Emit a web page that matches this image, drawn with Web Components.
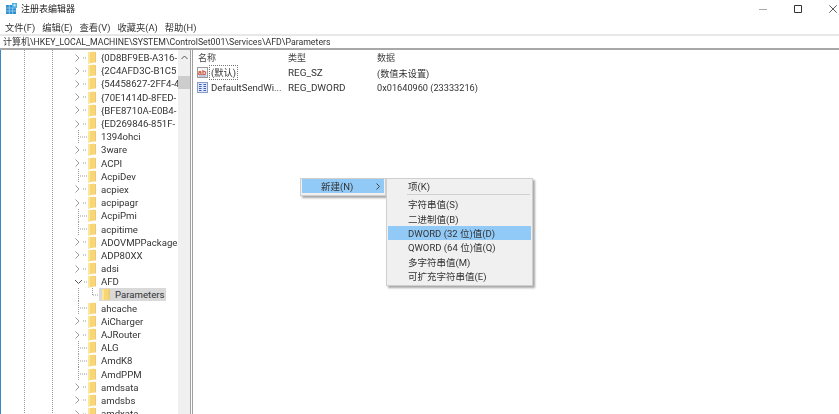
<!DOCTYPE html>
<html>
<head>
<meta charset="utf-8">
<title>注册表编辑器</title>
<style>
html, body { margin: 0; height: 100%; background: #fff; overflow: hidden; }
body { font: 9.6px Roboto, "Noto Sans CJK SC", sans-serif; color: #333; }
</style>
</head>
<body>
<reg-window>
	<reg-titlebar slot="title">注册表编辑器</reg-titlebar>
	<reg-menubar slot="menu">
		<span>文件(F)</span><span>编辑(E)</span><span>查看(V)</span><span>收藏夹(A)</span><span>帮助(H)</span>
	</reg-menubar>
	<reg-address slot="address"><span style="font-size:9px">计算机</span>\HKEY_LOCAL_MACHINE\SYSTEM\ControlSet001\Services\AFD\Parameters</reg-address>
	<reg-tree slot="tree">
		<tree-row kind="closed">{0D8BF9EB-A316-</tree-row>
		<tree-row kind="closed">{2C4AFD3C-B1C5</tree-row>
		<tree-row kind="closed">{54458627-2FF4-4</tree-row>
		<tree-row kind="closed">{70E1414D-8FED-</tree-row>
		<tree-row kind="closed">{BFE8710A-E0B4-</tree-row>
		<tree-row kind="closed">{ED269846-851F-</tree-row>
		<tree-row kind="leaf">1394ohci</tree-row>
		<tree-row kind="closed">3ware</tree-row>
		<tree-row kind="closed">ACPI</tree-row>
		<tree-row kind="leaf">AcpiDev</tree-row>
		<tree-row kind="closed">acpiex</tree-row>
		<tree-row kind="closed">acpipagr</tree-row>
		<tree-row kind="leaf">AcpiPmi</tree-row>
		<tree-row kind="leaf">acpitime</tree-row>
		<tree-row kind="closed">ADOVMPPackage</tree-row>
		<tree-row kind="closed">ADP80XX</tree-row>
		<tree-row kind="closed">adsi</tree-row>
		<tree-row kind="open">AFD</tree-row>
		<tree-row kind="child">Parameters</tree-row>
		<tree-row kind="leaf">ahcache</tree-row>
		<tree-row kind="closed">AiCharger</tree-row>
		<tree-row kind="closed">AJRouter</tree-row>
		<tree-row kind="leaf">ALG</tree-row>
		<tree-row kind="leaf">AmdK8</tree-row>
		<tree-row kind="leaf">AmdPPM</tree-row>
		<tree-row kind="closed">amdsata</tree-row>
		<tree-row kind="closed">amdsbs</tree-row>
		<tree-row kind="closed">amdxata</tree-row>
	</reg-tree>
	<reg-list slot="list">
		<list-row icon="sz" focused type="REG_SZ" data="(数值未设置)">(默认)</list-row>
		<list-row icon="dword" type="REG_DWORD" data="0x01640960 (23333216)">DefaultSendWi...</list-row>
	</reg-list>
</reg-window>
<reg-menu style="left:300px;top:178px;width:86px" class="parent">
	<menu-item hot arrow style="padding-left:19px">新建(N)</menu-item>
</reg-menu>
<reg-menu style="left:386px;top:178px;width:147px">
	<menu-item>项(K)</menu-item>
	<menu-sep></menu-sep>
	<menu-item>字符串值(S)</menu-item>
	<menu-item>二进制值(B)</menu-item>
	<menu-item hot>DWORD (32 位)值(D)</menu-item>
	<menu-item>QWORD (64 位)值(Q)</menu-item>
	<menu-item>多字符串值(M)</menu-item>
	<menu-item>可扩充字符串值(E)</menu-item>
</reg-menu>
<script>
const FOLDER = `<svg class="folder" width="8" height="13" viewBox="0 0 8 13"><path d="M0 1.5 L6.5 0.5 V11.5 L0 12.5 Z" fill="#f8d673"/><path d="M0 1.5 H2 V12.5 H0 Z" fill="#fce59d"/><path d="M6.5 1 H8 V11.5 H6.5 Z" fill="#f0c864"/></svg>`;

const define = (name, css, html) => {
	customElements.define(name, class extends HTMLElement {
		constructor() {
			super();
			this.attachShadow({ mode: 'open' }).innerHTML = `<style>${css}</style>${typeof html === 'function' ? html(this) : html}`;
		}
	});
};

define('reg-window', `
	:host { display: grid; grid-template-columns: 193px 1fr; grid-template-rows: 19px 17px 14px 1fr; height: 414px; width: 839px; filter: blur(.3px); }
	.top { grid-column: 1 / 3; }
	.tree { border-left: 1px solid #3a86c8; overflow: hidden; min-height: 0; }
	.list { min-height: 0; overflow: hidden; }
`, `
	<div class="top"><slot name="title"></slot></div>
	<div class="top"><slot name="menu"></slot></div>
	<div class="top"><slot name="address"></slot></div>
	<div class="tree"><slot name="tree"></slot></div>
	<div class="list"><slot name="list"></slot></div>
`);

define('reg-titlebar', `
	:host { display: flex; align-items: center; height: 19px; padding: 0 2px 0 6px; box-sizing: border-box; color: #222; font-size: 9px; }
	.text { margin-left: 4px; flex: 1; position: relative; top: -1px; }
	.caps { display: flex; align-items: center; gap: 27px; margin-top: -2px; }
	.caps svg { display: block; }
`, `
	<svg width="11" height="11" viewBox="0 0 11 11" style="margin-top:-2px">
		<rect x="0" y="2" width="10" height="9" fill="#2f8fd0"/>
		<path d="M3.3 2V11M6.6 2V11M0 5H10M0 8H10" stroke="#bfe0f5" stroke-width=".6"/>
		<rect x="6" y="0" width="5" height="5" fill="#4fb0e6"/>
		<rect x="7.5" y="1.3" width="2" height="2" fill="#d9eefa"/>
	</svg>
	<span class="text"><slot></slot></span>
	<div class="caps">
		<svg width="8" height="8" viewBox="0 0 8 8"><path d="M0 4.5H8" stroke="#aaa"/></svg>
		<svg width="8" height="8" viewBox="0 0 8 8"><path d="M.5.5H7.5V7.5H.5Z" fill="none" stroke="#333"/></svg>
		<svg width="8" height="8" viewBox="0 0 8 8"><path d="M.3.3L7.7 7.7M7.7.3L.3 7.7" stroke="#333" stroke-width=".8"/></svg>
	</div>
`);

define('reg-menubar', `
	:host { display: flex; align-items: center; height: 17px; padding: 0 0 0 5px; gap: 7px; box-sizing: border-box; font-size: 9.3px; color: #333; border-bottom: 2px solid #e8e8e8; }
`, `<slot></slot>`);

define('reg-address', `
	:host { display: block; height: 14px; line-height: 12px; padding-left: 3px; box-sizing: border-box; font-size: 8.76px; color: #333; border-bottom: 2px solid #a8a8a8; white-space: nowrap; }
`, `<slot></slot>`);

define('reg-tree', `
	:host { display: grid; grid-template-columns: 177px 12px 3px; height: 364px; }
	.rows {
		padding-top: 1px;
		overflow: hidden;
		background:
			repeating-linear-gradient(#999 0 1px, transparent 1px 2px) 23px 0 / 1px 100% no-repeat,
			repeating-linear-gradient(#999 0 1px, transparent 1px 2px) 51px 0 / 1px 100% no-repeat;
	}
	.bar { background: #f0f0f0; display: flex; flex-direction: column; align-items: stretch; }
	.up { height: 14px; display: flex; justify-content: center; align-items: center; }
	.thumb { height: 13px; margin-top: 12px; background: #cdcdcd; }
	.split { border-left: 1px solid #a0a0a0; border-right: 1px solid #a0a0a0; }
`, `
	<div class="rows"><slot></slot></div>
	<div class="bar">
		<div class="up"><svg width="7" height="5" viewBox="0 0 7 5"><path d="M.5 4L3.5 1L6.5 4" fill="none" stroke="#555"/></svg></div>
		<div class="thumb"></div>
	</div>
	<div class="split"></div>
`);

const DOTS = 'stroke="#999" stroke-dasharray="1 1"';
const PREFIX = {
	closed: `<path d="M1.5 3.5L5 7L1.5 10.5" fill="none" stroke="#999"/><path d="M9 7H13" ${DOTS}/>`,
	open: `<path d="M1 5L4.5 8.5L8 5" fill="none" stroke="#555"/><path d="M10 7H13" ${DOTS}/>`,
	leaf: `<path d="M4.5 0V14M6 7H13" ${DOTS}/>`,
	child: `<path d="M4.5 0V14M18.5 0V7M19 7H25" ${DOTS}/>`
};

define('tree-row', `
	:host { display: flex; align-items: center; height: 13.2px; padding-left: 73px; white-space: nowrap; color: #333; }
	svg { display: block; flex: none; }
	.label { margin-left: 5px; line-height: 13px; }
	:host([kind="child"]) .label { background: #d9d9d9; margin-left: 0; padding: 0 2px 0 5px; }
	.box { display: flex; background: #d9d9d9; padding-left: 3px; }
`, (el) => {
	const kind = el.getAttribute('kind');
	const wide = kind === 'child';
	return `<svg width="${wide ? 25 : 14}" height="14" viewBox="0 0 ${wide ? 25 : 14} 14">${PREFIX[kind]}</svg>
	${wide ? `<span class="box">${FOLDER}</span>` : FOLDER}
	<span class="label"><slot></slot></span>`;
});

define('reg-list', `
	:host { display: block; padding-top: 1px; }
	.head { display: grid; grid-template-columns: 90px 89px 1fr; height: 14px; line-height: 14px; padding-left: 5px; color: #444; font-size: 9px; }
`, `
	<div class="head"><span>名称</span><span>类型</span><span>数据</span></div>
	<slot></slot>
`);

define('list-row', `
	:host { display: grid; grid-template-columns: 91px 89px 1fr; height: 15px; align-items: center; padding-left: 4px; white-space: nowrap; color: #333; }
	.name { display: flex; align-items: center; gap: 2px; }
	svg { display: block; flex: none; }
	.label { padding: 0 1px; line-height: 13px; border: 1px solid transparent; margin-left: -1px; }
	:host([focused]) .label { border: 1px dotted #777; font-size: 9.3px; }
	.type { font-size: 9.9px; }
	.data { font-size: 9.2px; }
`, (el) => {
	const icon = el.getAttribute('icon') === 'sz'
		? `<svg width="11" height="11" viewBox="0 0 11 11"><rect x=".5" y=".5" width="10" height="10" fill="#f7f7f7" stroke="#9a9a9a"/><text x="1" y="7.5" font-family="Liberation Sans" font-size="7" font-weight="bold" fill="#c8442a">ab</text><path d="M1.5 9H9.5" stroke="#7a9ccc"/></svg>`
		: `<svg width="11" height="11" viewBox="0 0 11 11"><rect x=".5" y=".5" width="10" height="10" fill="#dfe7f8" stroke="#8a9cc4"/><path d="M2 2.5H4.5M6.5 2.5H9M2 4.5H4.5M6.5 4.5H9M2 6.5H4.5M6.5 6.5H9M2 8.5H4.5M6.5 8.5H9" stroke="#3a5cc0"/></svg>`;
	return `<span class="name">${icon}<span class="label"><slot></slot></span></span>
	<span class="type">${el.getAttribute('type')}</span><span class="data">${el.getAttribute('data')}</span>`;
});

define('reg-menu', `
	:host { position: absolute; display: block; box-sizing: border-box; background: #f0f0f0; border: 1px solid #cfcfcf; padding: 0 1px 2px; box-shadow: 2px 2px 2px rgba(0,0,0,.35); filter: blur(.3px); }
`, `<slot></slot>`);

define('menu-item', `
	:host { display: flex; align-items: center; justify-content: space-between; height: 14.3px; padding: 0 4px 0 20px; white-space: nowrap; color: #333; font-size: 9.5px; }
	:host([hot]) { background: #91c9f7; }
	svg { display: block; }
`, (el) => `<span><slot></slot></span>${el.hasAttribute('arrow') ? '<svg width="4" height="7" viewBox="0 0 4 7"><path d="M.5.5L3.5 3.5L.5 6.5" fill="none" stroke="#444"/></svg>' : ''}`);

define('menu-sep', `
	:host { display: block; height: 1px; margin: 1px 1px 2px 19px; background: #d0d0d0; }
`, ``);
</script>
</body>
</html>
